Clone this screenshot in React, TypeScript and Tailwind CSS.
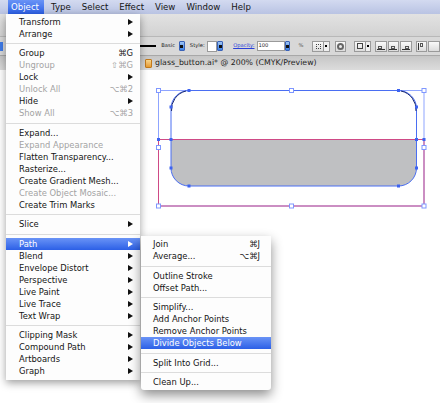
import React from "react";

type Item =
  | { sep: number }
  | { t: string; sc?: string; arrow?: boolean; dis?: boolean; hl?: boolean };

const mainItems: Item[] = [
  { t: "Transform", arrow: true },
  { t: "Arrange", arrow: true },
  { sep: 7 },
  { t: "Group", sc: "⌘G" },
  { t: "Ungroup", sc: "⇧⌘G", dis: true },
  { t: "Lock", arrow: true },
  { t: "Unlock All", sc: "⌥⌘2", dis: true },
  { t: "Hide", arrow: true },
  { t: "Show All", sc: "⌥⌘3", dis: true },
  { sep: 8 },
  { t: "Expand..." },
  { t: "Expand Appearance", dis: true },
  { t: "Flatten Transparency..." },
  { t: "Rasterize..." },
  { t: "Create Gradient Mesh..." },
  { t: "Create Object Mosaic...", dis: true },
  { t: "Create Trim Marks" },
  { sep: 7 },
  { t: "Slice", arrow: true },
  { sep: 8 },
  { t: "Path", arrow: true, hl: true },
  { t: "Blend", arrow: true },
  { t: "Envelope Distort", arrow: true },
  { t: "Perspective", arrow: true },
  { t: "Live Paint", arrow: true },
  { t: "Live Trace", arrow: true },
  { t: "Text Wrap", arrow: true },
  { sep: 7 },
  { t: "Clipping Mask", arrow: true },
  { t: "Compound Path", arrow: true },
  { t: "Artboards", arrow: true },
  { t: "Graph", arrow: true },
];

const subItems: Item[] = [
  { t: "Join", sc: "⌘J" },
  { t: "Average...", sc: "⌥⌘J" },
  { sep: 8 },
  { t: "Outline Stroke" },
  { t: "Offset Path..." },
  { sep: 7 },
  { t: "Simplify..." },
  { t: "Add Anchor Points" },
  { t: "Remove Anchor Points" },
  { t: "Divide Objects Below", hl: true },
  { sep: 8 },
  { t: "Split Into Grid..." },
  { sep: 7 },
  { t: "Clean Up..." },
];

function Arrow({ white }: { white?: boolean }) {
  return (
    <svg width="5" height="6" viewBox="0 0 5 6" className="block">
      <path d="M0 0 L5 3 L0 6 Z" fill={white ? "#ffffff" : "#111111"} />
    </svg>
  );
}

function MenuList({ items, pl, pr }: { items: Item[]; pl: string; pr: string }) {
  return (
    <>
      {items.map((it, i) => {
        if ("sep" in it) {
          return (
            <div
              key={i}
              className={`flex items-center ${it.sep === 8 ? "h-[8px]" : "h-[7px]"}`}
            >
              <div className="h-px w-full bg-[#dcdcdc]" />
            </div>
          );
        }
        const color = it.hl ? "text-white" : it.dis ? "text-[#a3a3a3]" : "text-[#141414]";
        return (
          <div
            key={i}
            className={`flex h-[12px] items-center ${pl} ${pr} ${color} ${
              it.hl ? "bg-gradient-to-b from-[#6a93f6] to-[#2c5fe6]" : ""
            }`}
          >
            <span className="flex-1 whitespace-nowrap">{it.t}</span>
            {it.sc && <span className="whitespace-nowrap">{it.sc}</span>}
            {it.arrow && <Arrow white={it.hl} />}
          </div>
        );
      })}
    </>
  );
}

function BlueBtn({ className = "" }: { className?: string }) {
  return (
    <div
      className={`flex h-[10px] w-[6px] items-center justify-center rounded-[1px] border border-[#3a63b8] bg-gradient-to-b from-[#9cc4f5] to-[#3e82e4] ${className}`}
    >
      <div className="h-[3px] w-[3px] bg-[#111]" />
    </div>
  );
}

function IconBox({ className = "", children }: { className?: string; children?: React.ReactNode }) {
  return (
    <div
      className={`flex h-[11px] w-[12px] items-center justify-center border border-[#9a9a9a] bg-gradient-to-b from-[#fafafa] to-[#dcdcdc] ${className}`}
    >
      {children}
    </div>
  );
}

export default function App() {
  const menuBar = ["Type", "Select", "Effect", "View", "Window", "Help"];
  return (
    <div className="relative h-[403px] w-[440px] overflow-hidden bg-white font-['DejaVu_Sans',sans-serif]">
      {/* menu bar */}
      <div className="flex h-[14px] items-center bg-gradient-to-b from-[#d3daf0] to-[#b9c3e3] pl-[8px] text-[8.6px] leading-[14px] text-[#151515]">
        <div className="flex h-[14px] items-center bg-gradient-to-b from-[#6a93f6] to-[#2c5fe6] pl-[3px] pr-[5px] text-white">
          Object
        </div>
        {menuBar.map((m) => (
          <span key={m} className="ml-[11px] [&:first-of-type]:ml-[7px]">
            {m}
          </span>
        ))}
      </div>

      {/* window toolbar area */}
      <div className="h-[23px] border-b border-[#b8b8b8] bg-gradient-to-b from-[#e2e2e2] to-[#d2d2d2]" />

      {/* control bar */}
      <div className="flex h-[18px] items-center bg-[#d8d8d8] text-[5.2px] text-[#222]">
        <div className="h-[9px] w-[3px] bg-[#3f7be8]" />
        <div className="ml-[137px] h-[1.5px] w-[17px] bg-black" />
        <span className="ml-[5px]">Basic</span>
        <BlueBtn className="ml-[4px]" />
        <span className="ml-[5px]">Style:</span>
        <div className="ml-[2px] h-[11px] w-[11px] border border-[#9a9a9a] bg-white" />
        <BlueBtn />
        <span className="ml-[10px] text-[#2a3fd8] underline">Opacity:</span>
        <div className="ml-[2px] flex h-[10px] w-[29px] items-center border border-[#9a9a9a] bg-white pl-[1px]">
          100
        </div>
        <BlueBtn />
        <span className="ml-[8px] text-[#555]">%</span>
        <IconBox className="ml-[9px]">
          <div className="h-[5px] w-[5px] border border-dotted border-[#444]" />
        </IconBox>
        <div className="flex h-[11px] w-[6px] items-center justify-center border border-l-0 border-[#9a9a9a] bg-[#eee]">
          <div className="h-[2px] w-[2px] bg-black" />
        </div>
        <IconBox className="ml-[5px]">
          <div className="h-[7px] w-[7px] rounded-full border-2 border-[#666]" />
        </IconBox>
        <IconBox className="ml-[8px]">
          <div className="h-[6px] w-[6px] border border-dashed border-[#444]" />
        </IconBox>
        <div className="flex h-[11px] w-[5px] items-center justify-center border border-l-0 border-[#9a9a9a] bg-[#eee]">
          <div className="h-[2px] w-[2px] bg-black" />
        </div>
        <IconBox className="ml-[4px]">
          <div className="flex h-[7px] w-[8px] flex-col justify-end">
            <div className="ml-[1px] h-[3px] w-[4px] border border-[#555]" />
            <div className="h-px w-[8px] bg-[#333]" />
          </div>
        </IconBox>
        <IconBox className="ml-[1px]">
          <div className="flex h-[7px] w-[8px] flex-col items-center justify-end">
            <div className="h-[3px] w-[4px] border border-[#555]" />
            <div className="h-px w-[8px] bg-[#333]" />
          </div>
        </IconBox>
        <IconBox className="ml-[1px]">
          <div className="flex h-[7px] w-[8px] flex-col items-end justify-end">
            <div className="mr-[1px] h-[3px] w-[4px] border border-[#555]" />
            <div className="h-px w-[8px] bg-[#333]" />
          </div>
        </IconBox>
        <IconBox className="ml-[4px]">
          <div className="flex h-[7px] w-[8px] items-start gap-[1px]">
            <div className="h-[7px] w-px bg-[#333]" />
            <div className="h-[4px] w-[3px] border border-[#555]" />
          </div>
        </IconBox>
        <IconBox className="ml-[1px]" />
      </div>

      {/* document tab */}
      <div className="flex h-[15px] items-center border-t border-[#a8a8a8] bg-gradient-to-b from-[#c6c6c6] to-[#dcdcdc] text-[7.8px] text-[#1d1d1d]">
        <div className="ml-[145px] h-[9px] w-[7px] rounded-[1px] border border-[#c27a1c] bg-gradient-to-b from-[#f9d68a] to-[#e79b2e]" />
        <span className="ml-[3px] whitespace-nowrap">glass_button.ai* @ 200% (CMYK/Preview)</span>
      </div>

      {/* canvas */}
      <div className="relative h-[332px] w-full bg-white">
        <svg width="440" height="332" viewBox="0 71 440 332" className="block">
          <path
            d="M171 109 A18 18 0 0 1 189 91 H398.5 A18 18 0 0 1 416.5 109 V169 A18 18 0 0 1 398.5 187 H189 A18 18 0 0 1 171 169 Z"
            fill="#ffffff"
          />
          <path
            d="M171 140 H416.5 V169 A18 18 0 0 1 398.5 187 H189 A18 18 0 0 1 171 169 Z"
            fill="#bfc0c2"
          />
          <rect x="158.5" y="91.5" width="265.5" height="115.5" fill="none" stroke="#8fa5ff" strokeWidth="1" />
          <path d="M158.5 140.5 H424 V207 H158.5 Z" fill="none" stroke="#cf4a86" strokeWidth="1" />
          <path
            d="M171 109 A18 18 0 0 1 189 91.5 H398.5 A18 18 0 0 1 416.5 109 V169 A18 18 0 0 1 398.5 187 H189 A18 18 0 0 1 171 169 Z"
            fill="none"
            stroke="#4a6ef2"
            strokeWidth="1"
          />
          <path d="M171.5 112 A19 19 0 0 1 186 92" fill="none" stroke="#1b2a70" strokeWidth="1" />
          <path d="M401 92 A19 19 0 0 1 416 112" fill="none" stroke="#1b2a70" strokeWidth="1" />
          {[
            [189, 91.5],
            [398.5, 91.5],
            [171, 108],
            [416.5, 108],
            [171, 140.5],
            [416.5, 140.5],
            [158.5, 140.5],
            [424, 140.5],
            [171, 169],
            [416.5, 169],
            [189, 187],
            [398.5, 187],
          ].map(([x, y], i) => (
            <rect key={i} x={x - 1.5} y={y - 1.5} width="3" height="3" fill="#3d63f0" />
          ))}
          {[
            [158.5, 91.5],
            [291.5, 91.5],
            [424, 91.5],
            [158.5, 148.5],
            [424, 148.5],
            [158.5, 207],
            [291.5, 207],
            [424, 207],
          ].map(([x, y], i) => (
            <rect
              key={i}
              x={x - 2}
              y={y - 2}
              width="4"
              height="4"
              fill="#ffffff"
              stroke="#7f97ff"
              strokeWidth="1"
            />
          ))}
        </svg>
      </div>

      {/* Object menu */}
      <div className="absolute left-[6px] top-[14px] w-[134px] bg-[#fdfdfd] pb-[3px] pt-[2px] text-[8.4px] leading-[12px] shadow-[0_3px_8px_rgba(0,0,0,0.38)]">
        <MenuList items={mainItems} pl="pl-[13px]" pr="pr-[7px]" />
      </div>

      {/* Path submenu */}
      <div className="absolute left-[141px] top-[236px] w-[130px] rounded-b-[3px] bg-[#fdfdfd] pb-[2px] pt-[2px] text-[8.4px] leading-[12px] shadow-[0_5px_12px_rgba(0,0,0,0.45)]">
        <MenuList items={subItems} pl="pl-[12px]" pr="pr-[11px]" />
      </div>
    </div>
  );
}
